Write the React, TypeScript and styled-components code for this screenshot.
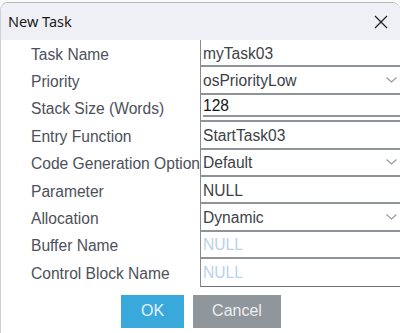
import React from "react";
import styled, { createGlobalStyle } from "styled-components";

const GlobalStyle = createGlobalStyle`
  html, body {
    margin: 0;
    padding: 0;
    background: #fafafa;
    overflow: hidden;
  }
`;

type Field = {
  label: string;
  value: string;
  kind?: "text" | "select" | "spin" | "placeholder";
};

const fields: Field[] = [
  { label: "Task Name", value: "myTask03" },
  { label: "Priority", value: "osPriorityLow", kind: "select" },
  { label: "Stack Size (Words)", value: "128", kind: "spin" },
  { label: "Entry Function", value: "StartTask03" },
  { label: "Code Generation Option", value: "Default", kind: "select" },
  { label: "Parameter", value: "NULL" },
  { label: "Allocation", value: "Dynamic", kind: "select" },
  { label: "Buffer Name", value: "NULL", kind: "placeholder" },
  { label: "Control Block Name", value: "NULL", kind: "placeholder" },
];

export default function App() {
  return (
    <>
      <GlobalStyle />
      <Dialog>
        <TitleBar>
          <Title>New Task</Title>
          <CloseIcon width="14" height="14" viewBox="0 0 14 14">
            <path d="M1 1 L13 13 M13 1 L1 13" />
          </CloseIcon>
        </TitleBar>
        <Body>
          <Form>
            {fields.map((f, i) => {
              const last = i === fields.length - 1;
              return (
                <React.Fragment key={f.label}>
                  <Label>{f.label}</Label>
                  <Value $last={last} $kind={f.kind || "text"}>
                    {f.kind === "spin" ? (
                      <Spin>{f.value}</Spin>
                    ) : (
                      <span>{f.value}</span>
                    )}
                    {f.kind === "select" && (
                      <Chevron width="11" height="6" viewBox="0 0 11 6">
                        <polyline points="0.5,0.5 5.5,5 10.5,0.5" />
                      </Chevron>
                    )}
                  </Value>
                </React.Fragment>
              );
            })}
          </Form>
          <Footer>
            <Button $variant="primary">OK</Button>
            <Button $variant="secondary">Cancel</Button>
          </Footer>
        </Body>
      </Dialog>
    </>
  );
}

const Dialog = styled.div`
  margin-top: 2px;
  width: 400px;
  border-top: 1px solid #b4b6ba;
  border-left: 1px solid #d0d2d6;
  border-radius: 8px 8px 0 0;
  overflow: hidden;
  background: #ffffff;
  box-sizing: border-box;
`;

const TitleBar = styled.div`
  height: 37px;
  background: #eff0f5;
  display: flex;
  align-items: center;
  justify-content: space-between;
  padding: 0 12px 0 7px;
`;

const Title = styled.div`
  font-family: "Noto Sans", "Open Sans", sans-serif;
  font-size: 14.5px;
  color: #1b1b1b;
  padding-bottom: 1px;
`;

const CloseIcon = styled.svg`
  fill: none;
  stroke: #1e1e1e;
  stroke-width: 1.2;
`;

const Body = styled.div`
  background: #ffffff;
  padding-bottom: 8px;
`;

const Form = styled.div`
  display: grid;
  grid-template-columns: 199px 1fr;
  grid-template-rows: repeat(9, 27.4px);
`;

const Label = styled.div`
  padding-left: 30px;
  display: flex;
  align-items: center;
  padding-top: 2px;
  white-space: nowrap;
  overflow: hidden;
  font-family: "Liberation Sans", Arial, sans-serif;
  font-size: 15.6px;
  color: #4d505b;
`;

const Value = styled.div<{ $last: boolean; $kind: string }>`
  display: flex;
  align-items: center;
  justify-content: space-between;
  border-left: 1px solid #888b90;
  border-bottom: ${(p) => (p.$last ? "1px solid #6f7277" : "2px solid #8e9399")};
  padding: ${(p) => (p.$kind === "spin" ? "0 0 0 2px" : "2px 3px 0 2px")};
  font-family: "Liberation Sans", Arial, sans-serif;
  font-size: 15.6px;
  color: ${(p) => (p.$kind === "placeholder" ? "#b9d2ec" : "#3d3f47")};
  box-sizing: border-box;
  min-width: 0;
`;

const Spin = styled.div`
  align-self: stretch;
  flex: 1;
  display: flex;
  align-items: center;
  padding-top: 3px;
  margin-bottom: 3px;
  border-bottom: 2px solid #8e9399;
  color: #16171a;
`;

const Chevron = styled.svg`
  fill: none;
  stroke: #97999e;
  stroke-width: 1.1;
  margin-top: -2px;
`;

const Footer = styled.div`
  display: flex;
  gap: 9px;
  padding: 8px 0 0 120px;
`;

const Button = styled.div<{ $variant: "primary" | "secondary" }>`
  height: 33px;
  width: ${(p) => (p.$variant === "primary" ? "63px" : "88px")};
  display: flex;
  align-items: center;
  justify-content: center;
  background: ${(p) => (p.$variant === "primary" ? "#39a9dc" : "#8f969c")};
  color: ${(p) => (p.$variant === "primary" ? "#e4f2fa" : "#eceef0")};
  font-family: "Liberation Sans", Arial, sans-serif;
  font-size: 16px;
`;
